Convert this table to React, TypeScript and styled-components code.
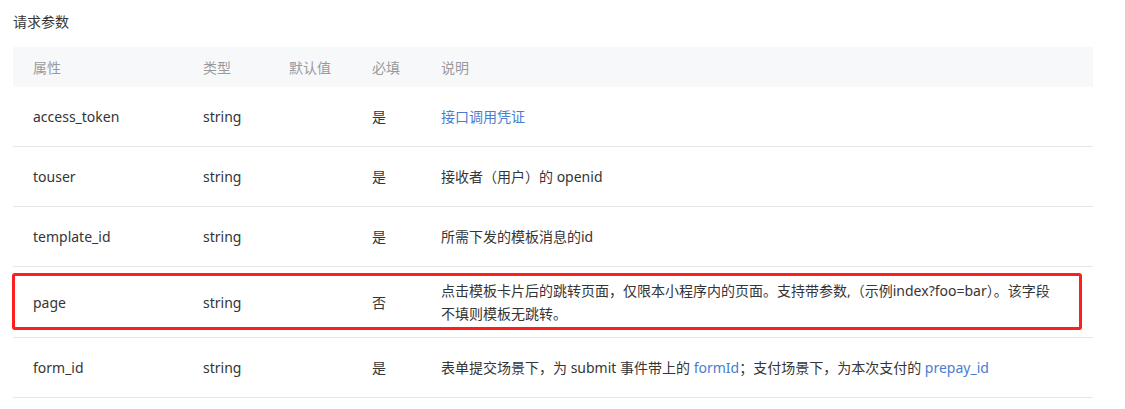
import React from "react"
import styled, { createGlobalStyle } from "styled-components"

const GlobalStyle = createGlobalStyle`
  body {
    margin: 0;
    background: #fff;
    font-family: "Noto Sans", "Noto Sans CJK SC", sans-serif;
    color: #353535;
  }
`
const Page = styled.div`
  padding: 12px 32px 0 13px;
`
const Title = styled.h3`
  margin: 0 0 15px;
  font-size: 14px;
  font-weight: normal;
  line-height: 20px;
  color: #353535;
`
const Table = styled.div`
  width: 1080px;
  font-size: 14px;
`
const columns = "170px 86px 83px 69px 1fr"

const Head = styled.div`
  display: grid;
  grid-template-columns: ${columns};
  height: 40px;
  align-items: center;
  background: #f7f8fa;
  color: #9a9a9a;
`
const Row = styled.div`
  position: relative;
  display: grid;
  grid-template-columns: ${columns};
  min-height: 60px;
  align-items: center;
  padding: 12px 0;
  box-sizing: border-box;
  border-bottom: 1px solid #e7e7e7;
`
const Cell = styled.div`
  padding: 0 20px;
  line-height: 23px;
`
const Desc = styled(Cell)`
  padding-right: 8px;
`
const Link = styled.span`
  color: #4a7dcf;
`
const Highlight = styled.div`
  position: absolute;
  left: -1px;
  top: 6px;
  width: 1070px;
  height: 57px;
  border: 3px solid #ff1e1e;
  border-radius: 3px;
  box-sizing: border-box;
  pointer-events: none;
`

type Param = {
  name: string
  type: string
  def: string
  required: string
  desc: React.ReactNode
  marked?: boolean
}

const params: Param[] = [
  { name: "access_token", type: "string", def: "", required: "是", desc: <Link>接口调用凭证</Link> },
  { name: "touser", type: "string", def: "", required: "是", desc: "接收者（用户）的 openid" },
  { name: "template_id", type: "string", def: "", required: "是", desc: "所需下发的模板消息的id" },
  {
    name: "page",
    type: "string",
    def: "",
    required: "否",
    marked: true,
    desc: (
      <>
        点击模板卡片后的跳转页面，仅限本小程序内的页面。支持带参数,（示例index?foo=bar）。该字段
        <br />
        不填则模板无跳转。
      </>
    ),
  },
  {
    name: "form_id",
    type: "string",
    def: "",
    required: "是",
    desc: (
      <>
        表单提交场景下，为 submit 事件带上的 <Link>formId</Link>；支付场景下，为本次支付的 <Link>prepay_id</Link>
      </>
    ),
  },
]

function App() {
  return (
    <Page>
      <GlobalStyle />
      <Title>请求参数</Title>
      <Table>
        <Head>
          <Cell>属性</Cell>
          <Cell>类型</Cell>
          <Cell>默认值</Cell>
          <Cell>必填</Cell>
          <Cell>说明</Cell>
        </Head>
        {params.map((p) => (
          <Row key={p.name}>
            <Cell>{p.name}</Cell>
            <Cell>{p.type}</Cell>
            <Cell>{p.def}</Cell>
            <Cell>{p.required}</Cell>
            <Desc>{p.desc}</Desc>
            {p.marked ? <Highlight /> : null}
          </Row>
        ))}
      </Table>
    </Page>
  )
}

export default App
